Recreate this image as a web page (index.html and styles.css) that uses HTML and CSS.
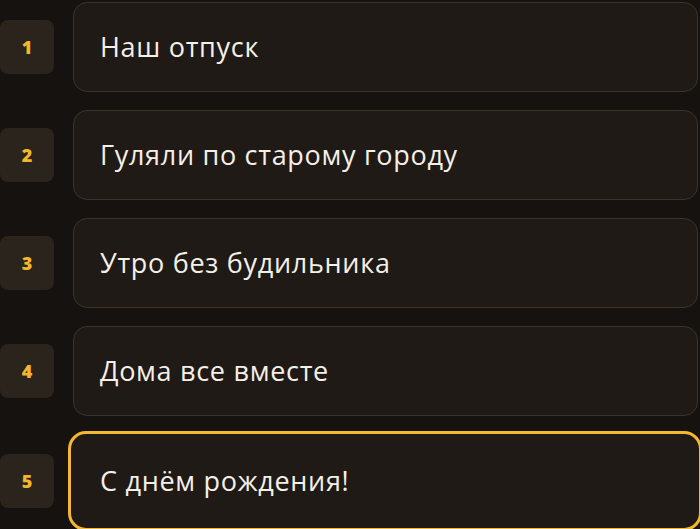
FILE: index.html
```html
<!DOCTYPE html>
<html lang="ru">
<head>
<meta charset="utf-8">
<link rel="stylesheet" href="styles.css">
</head>
<body>
<div class="list">
  <div class="row">
    <div class="num">1</div>
    <div class="card">Наш отпуск</div>
  </div>
  <div class="row">
    <div class="num">2</div>
    <div class="card">Гуляли по старому городу</div>
  </div>
  <div class="row">
    <div class="num">3</div>
    <div class="card">Утро без будильника</div>
  </div>
  <div class="row">
    <div class="num">4</div>
    <div class="card">Дома все вместе</div>
  </div>
  <div class="row row-active">
    <div class="num">5</div>
    <div class="card card-active">С днём рождения!</div>
  </div>
</div>
</body>
</html>
```
FILE: styles.css
```css
html, body {
  margin: 0;
  padding: 0;
  background: #15120f;
  overflow: hidden;
}
body {
  width: 700px;
  height: 529px;
  font-family: "Open Sans", "Noto Sans", sans-serif;
}
.list {
  display: flex;
  flex-direction: column;
  gap: 18px;
  padding-top: 2px;
  padding-right: 2px;
}
.row {
  display: flex;
  align-items: center;
  gap: 19px;
}
.num {
  flex: 0 0 54px;
  height: 54px;
  border-radius: 8px;
  background: #2a241c;
  color: #f4b62c;
  font-weight: 800;
  font-size: 18px;
  display: flex;
  align-items: center;
  justify-content: center;
}
.card {
  flex: 1;
  height: 90px;
  box-sizing: border-box;
  border: 1.5px solid #3a342b;
  border-radius: 14px;
  background: #1f1a15;
  color: #f4f0e8;
  font-size: 27px;
  font-weight: 500;
  letter-spacing: 0.7px;
  display: flex;
  align-items: center;
  padding-left: 26px;
  padding-bottom: 2px;
}
.row-active {
  margin-top: -3px;
  margin-right: -4px;
}
.row-active .num {
  margin-right: -5px;
}
.card-active {
  height: 100px;
  border: 3px solid #f5b731;
  border-radius: 18px;
  padding-left: 29px;
}
```
